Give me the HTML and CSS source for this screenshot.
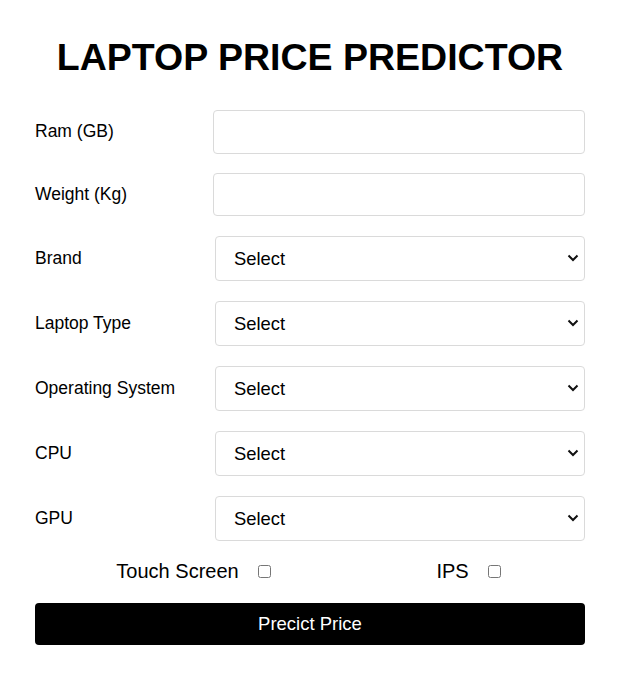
FILE: index.html
```html
<!DOCTYPE html>
<html lang="en">
<head>
<meta charset="utf-8">
<title>Laptop Price Predictor</title>
<link rel="stylesheet" href="styles.css">
</head>
<body>
<main class="page">
  <h1 class="title">LAPTOP PRICE PREDICTOR</h1>
  <form class="form">
    <div class="row">
      <label class="label">Ram (GB)</label>
      <input class="field" type="text">
    </div>
    <div class="row">
      <label class="label">Weight (Kg)</label>
      <input class="field" type="text">
    </div>
    <div class="row">
      <label class="label">Brand</label>
      <div class="select-wrap">
        <select class="select"><option>Select</option></select>
        <svg class="chev" width="12" height="8" viewBox="0 0 12 8"><path d="M1.5 1.5 L6 6 L10.5 1.5" fill="none" stroke="#111" stroke-width="2"/></svg>
      </div>
    </div>
    <div class="row">
      <label class="label">Laptop Type</label>
      <div class="select-wrap">
        <select class="select"><option>Select</option></select>
        <svg class="chev" width="12" height="8" viewBox="0 0 12 8"><path d="M1.5 1.5 L6 6 L10.5 1.5" fill="none" stroke="#111" stroke-width="2"/></svg>
      </div>
    </div>
    <div class="row">
      <label class="label">Operating System</label>
      <div class="select-wrap">
        <select class="select"><option>Select</option></select>
        <svg class="chev" width="12" height="8" viewBox="0 0 12 8"><path d="M1.5 1.5 L6 6 L10.5 1.5" fill="none" stroke="#111" stroke-width="2"/></svg>
      </div>
    </div>
    <div class="row">
      <label class="label">CPU</label>
      <div class="select-wrap">
        <select class="select"><option>Select</option></select>
        <svg class="chev" width="12" height="8" viewBox="0 0 12 8"><path d="M1.5 1.5 L6 6 L10.5 1.5" fill="none" stroke="#111" stroke-width="2"/></svg>
      </div>
    </div>
    <div class="row">
      <label class="label">GPU</label>
      <div class="select-wrap">
        <select class="select"><option>Select</option></select>
        <svg class="chev" width="12" height="8" viewBox="0 0 12 8"><path d="M1.5 1.5 L6 6 L10.5 1.5" fill="none" stroke="#111" stroke-width="2"/></svg>
      </div>
    </div>
    <div class="checks">
      <label class="check"><span>Touch Screen</span><input class="box" type="checkbox"></label>
      <label class="check"><span>IPS</span><input class="box" type="checkbox"></label>
    </div>
    <button class="btn" type="button">Precict Price</button>
  </form>
</main>
</body>
</html>
```
FILE: styles.css
```css
html, body {
  margin: 0;
  padding: 0;
  background: #fff;
}
body {
  font-family: "Liberation Sans", Arial, sans-serif;
  color: #000;
}
.page {
  width: 550px;
  margin: 0 35px;
}
.title {
  margin: 36px 0 31px;
  font-size: 37.5px;
  font-weight: 700;
  line-height: 43px;
  text-align: center;
}
.form {
  display: flex;
  flex-direction: column;
  gap: 19.2px;
}
.row {
  display: grid;
  grid-template-columns: 178px 1fr;
  align-items: center;
}
.label {
  font-size: 17.5px;
}
.field {
  box-sizing: border-box;
  height: 43.6px;
  width: 100%;
  margin: 0;
  border: 1px solid #dadada;
  border-radius: 4px;
  padding: 0 12px;
  font-family: inherit;
  font-size: 18px;
  background: #fff;
}
.select-wrap {
  position: relative;
  margin-left: 2px;
}
.select {
  -webkit-appearance: none;
  appearance: none;
  box-sizing: border-box;
  width: 100%;
  height: 45.8px;
  margin: 0;
  border: 1px solid #dadada;
  border-radius: 4px;
  padding: 0 30px 0 18px;
  font-family: inherit;
  font-size: 18.4px;
  color: #000;
  background: #fff;
}
.chev {
  position: absolute;
  right: 6px;
  top: 50%;
  margin-top: -4px;
  pointer-events: none;
}
.checks {
  display: flex;
  justify-content: space-around;
  font-size: 20px;
}
.check {
  display: block;
}
.box {
  width: 13px;
  height: 13px;
  margin: 3px 3px 3px 19px;
}
.btn {
  height: 42.5px;
  width: 100%;
  border: none;
  border-radius: 4px;
  background: #000;
  color: #fff;
  font-family: inherit;
  font-size: 18.5px;
  cursor: pointer;
}
```
